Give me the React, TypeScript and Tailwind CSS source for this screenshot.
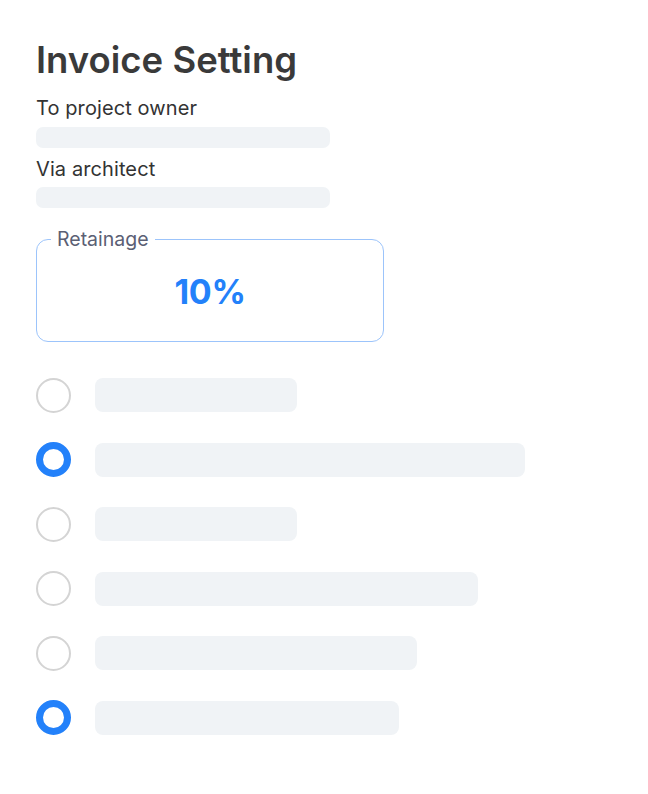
import React from "react";

const rows = [
  { checked: false, w: 202 },
  { checked: true, w: 430 },
  { checked: false, w: 202 },
  { checked: false, w: 383 },
  { checked: false, w: 322 },
  { checked: true, w: 304 },
];

export default function App() {
  return (
    <div className="w-[648px] h-[794px] bg-white pl-[36px] pt-[37px]" style={{ fontFamily: "Inter, 'Noto Sans', sans-serif" }}>
      <h1 className="text-[36.5px] leading-[46px] font-semibold text-[#3a3a3a] tracking-[0px]">Invoice Setting</h1>
      <div className="mt-[13px] text-[20px] leading-[24px] text-[#333333] tracking-[0.1px]">To project owner</div>
      <div className="mt-[7px] h-[21px] w-[294px] rounded-[7px] bg-[#f0f3f6]" />
      <div className="mt-[9px] text-[20px] leading-[24px] text-[#333333] tracking-[0.1px]">Via architect</div>
      <div className="mt-[6px] h-[21px] w-[294px] rounded-[7px] bg-[#f0f3f6]" />
      <fieldset className="mt-[20px] w-[348px] h-[114px] rounded-[12px] border-[1.5px] border-[#9cc4fb] px-[14px] pb-0 m-0 min-w-0">
        <legend className="px-[6px] text-[19.5px] leading-[22px] text-[#5b6074]">Retainage</legend>
        <div className="flex items-center justify-center h-[78px] pt-[4px] text-[34px] font-bold text-[#2381fa] tracking-[-0.3px]">10%</div>
      </fieldset>
      <div className="mt-[36px] flex flex-col gap-[30.5px]">
        {rows.map((r, i) => (
          <div key={i} className="flex items-center h-[34px]">
            {r.checked ? (
              <div className="w-[35px] h-[35px] rounded-full border-[7.5px] border-[#2381fa] bg-white shrink-0" />
            ) : (
              <div className="w-[35px] h-[35px] rounded-full border-[2px] border-[#d4d4d4] bg-white shrink-0" />
            )}
            <div className="ml-[24px] h-[34px] rounded-[8px] bg-[#f0f3f6]" style={{ width: r.w }} />
          </div>
        ))}
      </div>
    </div>
  );
}
